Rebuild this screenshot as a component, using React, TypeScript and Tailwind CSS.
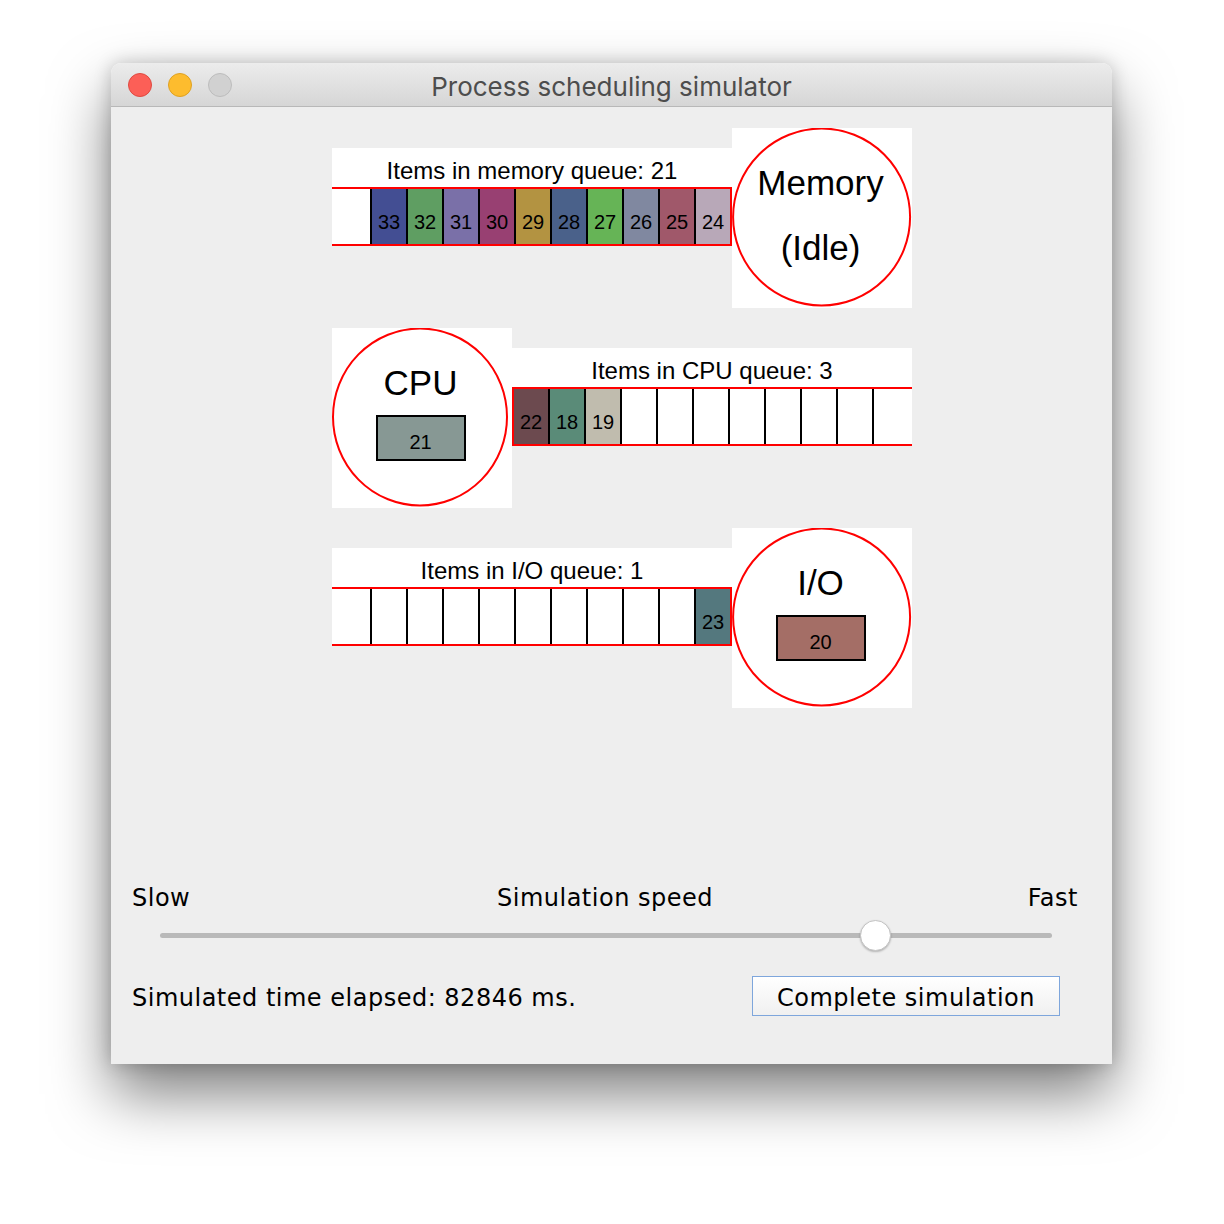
import type { ReactNode } from 'react'

type Cell = { n: number; color: string } | null

const MEMORY_QUEUE: Cell[] = [
  { n: 33, color: '#434e93' },
  { n: 32, color: '#5f9e62' },
  { n: 31, color: '#7a70a8' },
  { n: 30, color: '#984072' },
  { n: 29, color: '#b39341' },
  { n: 28, color: '#4a618a' },
  { n: 27, color: '#66b456' },
  { n: 26, color: '#8088a0' },
  { n: 25, color: '#a0586a' },
  { n: 24, color: '#b8a8b8' },
]

const CPU_QUEUE: Cell[] = [
  { n: 22, color: '#6c4a4f' },
  { n: 18, color: '#5a8b78' },
  { n: 19, color: '#c0bcae' },
  null, null, null, null, null, null, null,
]

const IO_QUEUE: Cell[] = [
  null, null, null, null, null, null, null, null, null,
  { n: 23, color: '#54787e' },
]

const PANEL_FONT = { fontFamily: '"Liberation Sans", Arial, sans-serif' }
const UI_FONT = { fontFamily: '"DejaVu Sans", "Lucida Grande", sans-serif' }

function QueueCell({ cell, side }: { cell: Cell; side: 'left' | 'right' }) {
  return (
    <div
      className={`w-[36px] h-full flex items-center justify-center pt-[10px] text-[20px] text-black border-black ${side === 'left' ? 'border-l-2' : 'border-r-2'} ${cell ? '' : 'bg-white'}`}
      style={cell ? { backgroundColor: cell.color } : undefined}
    >
      {cell?.n}
    </div>
  )
}

// circle === 'right' means the server sits to the right, queue drains rightwards
function Queue({ label, cells, circle }: { label: string; cells: Cell[]; circle: 'left' | 'right' }) {
  return (
    <div className="w-[400px] mt-[20px] flex flex-col" style={PANEL_FONT}>
      <div className="h-[39px] bg-white flex items-center justify-center pt-[6px] text-[24px] text-black">{label}</div>
      {circle === 'right' ? (
        <div className="h-[59px] bg-white flex border-y-2 border-r-2 border-[#ff0000]">
          <div className="flex-1" />
          {cells.map((c, i) => <QueueCell key={i} cell={c} side="left" />)}
        </div>
      ) : (
        <div className="h-[59px] bg-white flex border-y-2 border-l-2 border-[#ff0000]">
          {cells.map((c, i) => <QueueCell key={i} cell={c} side="right" />)}
          <div className="flex-1" />
        </div>
      )}
    </div>
  )
}

function Server({ title, children, cx = 89.6, rx = 88.5 }: { title: string; children: ReactNode; cx?: number; rx?: number }) {
  return (
    <div className="relative w-[180px] h-[180px] bg-white shrink-0" style={PANEL_FONT}>
      <svg className="absolute inset-0" width="180" height="180">
        <ellipse cx={cx} cy={89} rx={rx} ry={88.5} fill="none" stroke="#ff0000" strokeWidth="2" />
      </svg>
      <div className="relative flex flex-col items-center pt-[37px] pr-[3px]">
        <div className="text-[35px] leading-[35px] text-black">{title}</div>
        {children}
      </div>
    </div>
  )
}

function Job({ n, color }: { n: number; color: string }) {
  return (
    <div
      className="mt-[15px] w-[90px] h-[46px] border-2 border-black flex items-center justify-center pt-[8px] text-[20px] text-black"
      style={{ backgroundColor: color }}
    >
      {n}
    </div>
  )
}

export default function App() {
  const speed = 0.802

  return (
    <div className="min-h-[1224px] bg-white pt-[63px] pl-[111px]">
      <div className="w-[1001px] h-[1001px] rounded-t-[10px] overflow-hidden flex flex-col shadow-[0_30px_60px_rgba(0,0,0,0.5),0_0_18px_rgba(0,0,0,0.2)]">
        {/* Title bar */}
        <div className="relative h-[44px] shrink-0 bg-gradient-to-b from-[#ececec] to-[#d6d6d6] border-b border-[#b8b8b8] flex items-center">
          <div className="flex items-center gap-[16px] pl-[17px]">
            <span className="w-[24px] h-[24px] rounded-full bg-[#fc5f57] border border-[#de4a41]" />
            <span className="w-[24px] h-[24px] rounded-full bg-[#fdbc2e] border border-[#dea123]" />
            <span className="w-[24px] h-[24px] rounded-full bg-[#d1d1d1] border border-[#bcbcbc]" />
          </div>
          <div className="absolute inset-0 flex items-center justify-center pt-[4px] text-[26px] text-[#4d4d4d]" style={{ fontFamily: 'Inter, "Liberation Sans", sans-serif' }}>
            Process scheduling simulator
          </div>
        </div>

        {/* Content */}
        <div className="flex-1 bg-[#eeeeee] flex flex-col">
          <div className="ml-[221px] mt-[21px] w-[580px] flex flex-col gap-[20px]">
            <div className="flex items-start">
              <Queue label="Items in memory queue: 21" cells={MEMORY_QUEUE} circle="right" />
              <Server title="Memory">
                <div className="mt-[30px] text-[35px] leading-[35px] text-black">(Idle)</div>
              </Server>
            </div>

            <div className="flex items-start">
              <Server title="CPU" cx={88} rx={87}>
                <Job n={21} color="#879894" />
              </Server>
              <Queue label="Items in CPU queue: 3" cells={CPU_QUEUE} circle="left" />
            </div>

            <div className="flex items-start">
              <Queue label="Items in I/O queue: 1" cells={IO_QUEUE} circle="right" />
              <Server title="I/O">
                <Job n={20} color="#a46e66" />
              </Server>
            </div>
          </div>

          {/* Speed controls */}
          <div className="mt-auto pl-[21px] pr-[34px] pb-[48px] text-[24px] tracking-[0.5px] text-black" style={UI_FONT}>
            <div className="grid grid-cols-3 leading-[28px] pt-[1px]">
              <span>Slow</span>
              <span className="text-center">Simulation speed</span>
              <span className="text-right">Fast</span>
            </div>
            <div className="relative h-[32px] mt-[7px] ml-[28px] mr-[26px] flex items-center">
              <div className="w-full h-[5px] rounded-full bg-[#b9b9b9]" />
              <div
                className="absolute top-[0.5px] w-[31px] h-[31px] -ml-[15.5px] rounded-full bg-white border border-[#c4c4c4] shadow-[0_1px_2px_rgba(0,0,0,0.25)]"
                style={{ left: `${speed * 100}%` }}
              />
            </div>
            <div className="mt-[25px] flex items-center justify-between pr-[18px]">
              <span className="leading-[28px] pt-[4px]">Simulated time elapsed: 82846 ms.</span>
              <button className="w-[308px] h-[40px] border border-[#7ea6dc] bg-gradient-to-b from-white to-[#f0f0f0] leading-[28px] pt-[4px] text-black">
                Complete simulation
              </button>
            </div>
          </div>
        </div>
      </div>
    </div>
  )
}
